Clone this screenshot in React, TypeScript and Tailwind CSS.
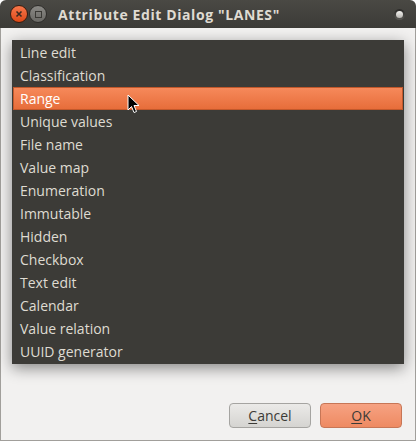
import React from "react";

const items = [
  "Line edit",
  "Classification",
  "Range",
  "Unique values",
  "File name",
  "Value map",
  "Enumeration",
  "Immutable",
  "Hidden",
  "Checkbox",
  "Text edit",
  "Calendar",
  "Value relation",
  "UUID generator",
];

const font = { fontFamily: '"Open Sans", "Noto Sans", sans-serif' };

function Cursor() {
  return (
    <svg
      className="absolute left-[127px] top-[94px]"
      width="14"
      height="21"
      viewBox="0 0 14 21"
    >
      <path
        d="M1 1 L1 16 L4.5 12.5 L7 18.5 L9.5 17.5 L7 11.5 L12 11.5 Z"
        fill="#000"
        stroke="#fff"
        strokeWidth="1"
        strokeLinejoin="round"
      />
    </svg>
  );
}

export default function App() {
  return (
    <div className="w-[416px] h-[441px] bg-white" style={font}>
      <div className="relative flex h-full flex-col">
        {/* Title bar */}
        <div className="flex h-[28px] items-center rounded-t-[6px] bg-gradient-to-b from-[#4a4944] to-[#3c3b37] px-[10px]">
          <div className="flex h-[18px] w-[18px] items-center justify-center rounded-full border border-[#3a1d10] bg-gradient-to-b from-[#f7774a] to-[#dd4814]">
            <svg width="8" height="8" viewBox="0 0 8 8">
              <path d="M1.5 1.5 L6.5 6.5 M6.5 1.5 L1.5 6.5" stroke="#3a2a20" strokeWidth="1.6" />
            </svg>
          </div>
          <div className="ml-[1px] flex h-[18px] w-[18px] items-center justify-center rounded-full border border-[#2e2d2a] bg-gradient-to-b from-[#8a8985] to-[#6a6965]">
            <div className="h-[7px] w-[7px] border border-[#3a3935]" />
          </div>
          <span className="ml-[11px] text-[14px] font-bold tracking-[0.6px] text-[#dfdbd2]">
            Attribute Edit Dialog "LANES"
          </span>
          <div className="ml-auto mr-[1px] flex h-[11px] w-[11px] items-center justify-center rounded-full bg-gradient-to-b from-[#2a2927] to-[#5a5955]">
            <div className="h-[7px] w-[7px] rounded-full bg-gradient-to-b from-[#f4f3f0] to-[#b8b6b1]" />
          </div>
        </div>

        {/* Body */}
        <div className="flex flex-1 flex-col border-x border-b border-[#a19f9b] bg-[#f2f1f0]">
          <div className="ml-[11px] mt-[12px] h-[324px] w-[392px] bg-[#3c3b37] py-[1px] shadow-[0_4px_14px_rgba(0,0,0,0.45)]">
            {items.map((item) =>
              item === "Range" ? (
                <div
                  key={item}
                  className="mx-[1px] flex h-[23px] items-center border border-[#c2582b] bg-gradient-to-b from-[#f6895a] to-[#e76d3a] pl-[6px] text-[14px] text-white"
                >
                  {item}
                </div>
              ) : (
                <div
                  key={item}
                  className="flex h-[23px] items-center pl-[8px] text-[14px] text-[#dfdbd2]"
                >
                  {item}
                </div>
              )
            )}
          </div>

          <div className="mt-auto mb-[12px] flex justify-end gap-[9px] pr-[13px]">
            <button className="h-[25px] w-[82px] rounded-[4px] border border-[#a5a4a1] bg-gradient-to-b from-[#ebeae8] to-[#d5d4d1] text-[14px] text-[#3c3b37]">
              <span className="underline underline-offset-2">C</span>ancel
            </button>
            <button className="h-[25px] w-[82px] rounded-[4px] border border-[#c77656] bg-gradient-to-b from-[#f6a282] to-[#ee8a62] text-[14px] text-[#3c3b37]">
              <span className="underline underline-offset-2">O</span>K
            </button>
          </div>
        </div>

        <Cursor />
      </div>
    </div>
  );
}
